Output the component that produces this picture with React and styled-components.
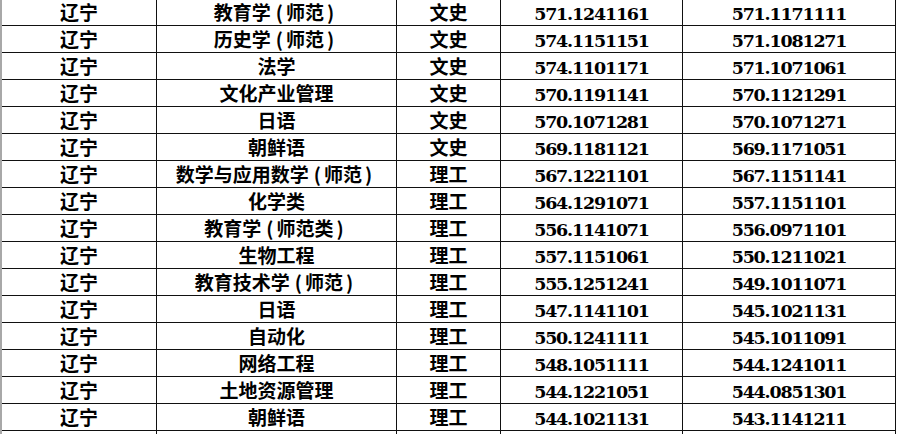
import React from 'react'
import styled, { createGlobalStyle } from 'styled-components'

const GlobalStyle = createGlobalStyle`
  html, body {
    margin: 0;
    padding: 0;
    background: #fff;
    overflow: hidden;
  }
`;

const Sheet = styled.div`
  width: 898px;
  height: 434px;
  overflow: hidden;
  background: #fff;
`;

const Table = styled.div`
  margin-top: -1px;
  width: 894px;
  border-left: 2px solid #a8a8a8;
`;

const Row = styled.div`
  display: grid;
  grid-template-columns: 155px 240px 104px 182px 213px;
  height: 27px;
`;

const Cell = styled.div`
  box-sizing: border-box;
  height: 27px;
  border-right: 1px solid #111;
  border-bottom: 1px solid #111;
  text-align: center;
  white-space: nowrap;
  overflow: hidden;
  color: #000;
  font-weight: 700;
  font-family: "Noto Sans CJK SC", "Noto Sans", sans-serif;
  font-size: 19px;
  line-height: 26px;
`;

const NumCell = styled(Cell)`
  font-family: "DejaVu Serif", "Liberation Serif", serif;
  font-size: 17.5px;
  letter-spacing: -1.2px;
  padding-top: 2px;
`;

const Paren = styled.span`
  margin: ${p => (p.$open ? '0 3px 0 5px' : '0 5px 0 3px')};
`;

// split "(…)" so the brackets get the wider spacing the sheet font has
const Major = ({ text }) =>
  text.split(/([()])/).map((part, i) =>
    part === '(' ? <Paren key={i} $open>(</Paren>
      : part === ')' ? <Paren key={i}>)</Paren>
      : part
  );

const rows = [
  ['教育学(师范)', '文史', '571.1241161', '571.1171111'],
  ['历史学(师范)', '文史', '574.1151151', '571.1081271'],
  ['法学', '文史', '574.1101171', '571.1071061'],
  ['文化产业管理', '文史', '570.1191141', '570.1121291'],
  ['日语', '文史', '570.1071281', '570.1071271'],
  ['朝鲜语', '文史', '569.1181121', '569.1171051'],
  ['数学与应用数学(师范)', '理工', '567.1221101', '567.1151141'],
  ['化学类', '理工', '564.1291071', '557.1151101'],
  ['教育学(师范类)', '理工', '556.1141071', '556.0971101'],
  ['生物工程', '理工', '557.1151061', '550.1211021'],
  ['教育技术学(师范)', '理工', '555.1251241', '549.1011071'],
  ['日语', '理工', '547.1141101', '545.1021131'],
  ['自动化', '理工', '550.1241111', '545.1011091'],
  ['网络工程', '理工', '548.1051111', '544.1241011'],
  ['土地资源管理', '理工', '544.1221051', '544.0851301'],
  ['朝鲜语', '理工', '544.1021131', '543.1141211'],
];

export default function App() {
  return (
    <Sheet>
      <GlobalStyle />
      <Table>
        {rows.map(([major, kind, a, b], i) => (
          <Row key={i}>
            <Cell>辽宁</Cell>
            <Cell><Major text={major} /></Cell>
            <Cell>{kind}</Cell>
            <NumCell>{a}</NumCell>
            <NumCell>{b}</NumCell>
          </Row>
        ))}
        <Row>
          <Cell />
          <Cell />
          <Cell />
          <NumCell />
          <NumCell />
        </Row>
      </Table>
    </Sheet>
  )
}
